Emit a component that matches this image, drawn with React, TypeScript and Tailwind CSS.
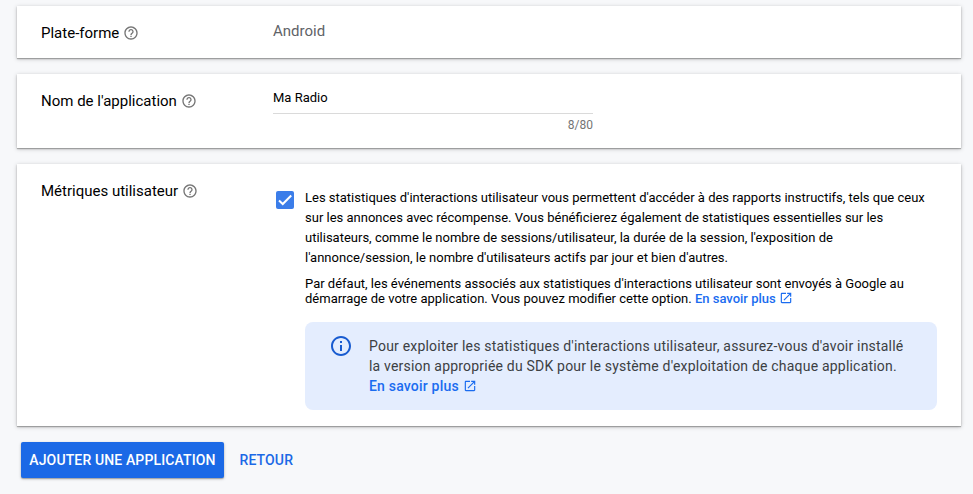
import React from "react";

const HELP =
  "M11 18h2v-2h-2v2zm1-16C6.48 2 2 6.48 2 12s4.48 10 10 10 10-4.48 10-10S17.52 2 12 2zm0 18c-4.41 0-8-3.59-8-8s3.59-8 8-8 8 3.59 8 8-3.59 8-8 8zm0-14c-2.21 0-4 1.79-4 4h2c0-1.1.9-2 2-2s2 .9 2 2c0 2-3 1.75-3 5h2c0-2.25 3-2.5 3-5 0-2.21-1.79-4-4-4z";
const OPEN =
  "M19 19H5V5h7V3H5c-1.11 0-2 .9-2 2v14c0 1.1.89 2 2 2h14c1.1 0 2-.9 2-2v-7h-2v7zM14 3v2h3.59l-9.83 9.83 1.41 1.41L19 6.41V10h2V3h-7z";
const INFO =
  "M11 7h2v2h-2zm0 4h2v6h-2zm1-9C6.48 2 2 6.48 2 12s4.48 10 10 10 10-4.48 10-10S17.52 2 12 2zm0 18c-4.41 0-8-3.59-8-8s3.59-8 8-8 8 3.59 8 8-3.59 8-8 8z";

function Icon({ d, className }: { d: string; className: string }) {
  return (
    <svg viewBox="0 0 24 24" fill="currentColor" className={className}>
      <path d={d} />
    </svg>
  );
}

function Card({ label, className, children }: { label: string; className: string; children: React.ReactNode }) {
  return (
    <section className={`flex bg-white pl-6 shadow-[0_1px_4px_rgba(0,0,0,0.25),0_1px_1px_rgba(0,0,0,0.25)] ${className}`}>
      <div className="mt-[17px] flex h-5 w-[232px] shrink-0 items-center gap-1 whitespace-nowrap text-[15px] leading-5 text-black">
        {label}
        <Icon d={HELP} className="-ml-[0.3px] size-4 text-[#757575]" />
      </div>
      {children}
    </section>
  );
}

function Link({ iconClass }: { iconClass: string }) {
  return (
    <a className="inline-flex items-center whitespace-nowrap font-medium text-[#1a6cf0]">
      En savoir plus
      <Icon d={OPEN} className={iconClass} />
    </a>
  );
}

export default function App() {
  return (
    <main className="h-[494px] w-[973px] overflow-hidden bg-[#f7f8fa] pl-[17px] pr-3 pt-1.5 font-[Roboto,sans-serif]">
      <Card label="Plate-forme" className="h-[52px]">
        <div className="mt-[15px] text-[15px] leading-5 text-[#5f6368]">Android</div>
      </Card>
      <Card label="Nom de l'application" className="mt-4 h-[74px]">
        <div className="w-80">
          <div className="h-10 border-b border-[#dadada] pt-[14px] text-[13px] leading-5 text-black">Ma Radio</div>
          <div className="mt-[3px] text-right text-xs leading-4 text-[#757575]">8/80</div>
        </div>
      </Card>
      <Card label="Métriques utilisateur" className="mt-4 h-[262px]">
        <div className="flex pt-6">
          <div className="ml-[3px] mt-[3px] flex size-[18px] shrink-0 items-center justify-center rounded-[2px] bg-[#3b7de9]">
            <svg viewBox="0 0 24 24" className="size-[18px]" fill="none" stroke="white" strokeWidth="2.7">
              <path d="M4 12.7 9 17.3 20.3 6" />
            </svg>
          </div>
          <div className="ml-[11px] w-[632px] whitespace-nowrap text-[13px] text-black">
            <p className="leading-5">
              Les statistiques d'interactions utilisateur vous permettent d'accéder à des rapports instructifs, tels que ceux
              <br />sur les annonces avec récompense. Vous bénéficierez également de statistiques essentielles sur les
              <br />utilisateurs, comme le nombre de sessions/utilisateur, la durée de la session, l'exposition de
              <br />l'annonce/session, le nombre d'utilisateurs actifs par jour et bien d'autres.
            </p>
            <p className="mt-2 leading-[15px]">
              Par défaut, les événements associés aux statistiques d'interactions utilisateur sont envoyés à Google au
              <br />démarrage de votre application. Vous pouvez modifier cette option. <Link iconClass="ml-[3px] size-3.5 -translate-y-px" />
            </p>
            <div className="mt-4 flex h-[88px] rounded-lg bg-[#e4edfe] pl-6 pt-[14px] text-sm leading-5 tracking-[0.2px] text-[#3c4043]">
              <Icon d={INFO} className="-mt-0.5 mr-4 size-6 shrink-0 text-[#185bd0]" />
              <p>
                Pour exploiter les statistiques d'interactions utilisateur, assurez-vous d'avoir installé
                <br />la version appropriée du SDK pour le système d'exploitation de chaque application.
                <br /><Link iconClass="ml-1 size-3.5" />
              </p>
            </div>
          </div>
        </div>
      </Card>
      <div className="ml-1 mt-4 flex h-9 items-center text-sm font-medium">
        <button className="h-9 w-[203px] whitespace-nowrap rounded-[2px] bg-[#1b69e6] tracking-[0.13px] text-white shadow-[0_1px_3px_rgba(0,0,0,0.25),0_1px_1px_rgba(0,0,0,0.2)]">AJOUTER UNE APPLICATION</button>
        <button className="ml-[15.5px] tracking-[0.13px] text-[#1b69e6]">RETOUR</button>
      </div>
    </main>
  );
}
